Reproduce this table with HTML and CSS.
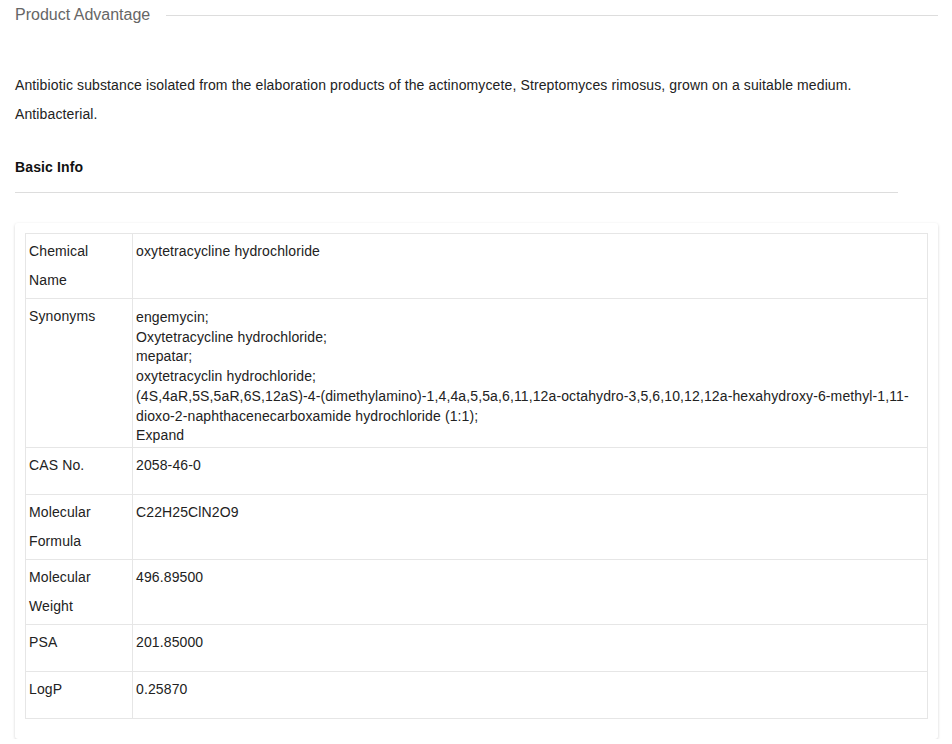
FILE: index.html
```html
<!DOCTYPE html>
<html lang="en">
<head>
	<meta charset="UTF-8">
	<title>oxytetracycline hydrochloride</title>
	<link rel="stylesheet" href="styles.css">
</head>
<body>
	<div class="wrap">
		<div class="sec_title"><h2>Product Advantage</h2><span class="line"></span></div>
		<div class="advantage">
			<p>Antibiotic substance isolated from the elaboration products of the actinomycete, Streptomyces rimosus, grown on a suitable medium.</p>
			<p>Antibacterial.</p>
		</div>
		<h3 class="basic_title">Basic Info</h3>
		<div class="info_box">
			<table class="info_table">
				<tr>
					<th>Chemical Name</th>
					<td>oxytetracycline hydrochloride</td>
				</tr>
				<tr>
					<th>Synonyms</th>
					<td><div class="syn">engemycin;<br>Oxytetracycline hydrochloride;<br>mepatar;<br>oxytetracyclin hydrochloride;<br>(4S,4aR,5S,5aR,6S,12aS)-4-(dimethylamino)-1,4,4a,5,5a,6,11,12a-octahydro-3,5,6,10,12,12a-hexahydroxy-6-methyl-1,11-dioxo-2-naphthacenecarboxamide hydrochloride (1:1);<br><a href="javascript:;">Expand</a></div></td>
				</tr>
				<tr>
					<th>CAS No.</th>
					<td>2058-46-0</td>
				</tr>
				<tr>
					<th>Molecular Formula</th>
					<td>C22H25ClN2O9</td>
				</tr>
				<tr>
					<th>Molecular Weight</th>
					<td>496.89500</td>
				</tr>
				<tr>
					<th>PSA</th>
					<td>201.85000</td>
				</tr>
				<tr>
					<th>LogP</th>
					<td>0.25870</td>
				</tr>
			</table>
		</div>
	</div>
</body>
</html>
```
FILE: styles.css
```css
body,div,p,h2,h3,table,th,td {
	margin:0;
	padding:0;
}
body {
	font-family: "Liberation Sans", Arial, sans-serif;
	font-size: 14px;
	letter-spacing: 0.12px;
	color: #222;
	background: #fff;
}
a {
	text-decoration: none;
	color: #222;
}
.wrap {
	padding: 0 14px 0 15px;
}
.sec_title {
	display: flex;
	align-items: center;
	height: 30px;
}
.sec_title h2 {
	font-size: 16px;
	font-weight: normal;
	color: #666;
	padding-right: 16px;
	letter-spacing: 0;
}
.sec_title .line {
	flex: 1;
	height: 1px;
	background: #ddd;
}
.advantage {
	padding-top: 41px;
	line-height: 29px;
}
.basic_title {
	font-size: 14px;
	font-weight: bold;
	color: #111;
	line-height: 29px;
	margin-top: 24px;
	padding-bottom: 10px;
	border-bottom: 1px solid #ddd;
	margin-right: 40px;
}
.info_box {
	margin-top: 30px;
	padding: 10px 10px 20px;
	border-radius: 3px;
	box-shadow: 0 1px 3px rgba(0,0,0,0.18);
}
.info_table {
	width: 100%;
	border-collapse: collapse;
	line-height: 29px;
}
.info_table th,
.info_table td {
	border: 1px solid #e6e6e6;
	padding: 3px;
	text-align: left;
	vertical-align: top;
	height: 40px;
}
.info_table th {
	width: 100px;
	font-weight: normal;
}
.info_table .syn {
	line-height: 19.7px;
	padding-top: 6px;
	margin-bottom: -2px;
}
```
